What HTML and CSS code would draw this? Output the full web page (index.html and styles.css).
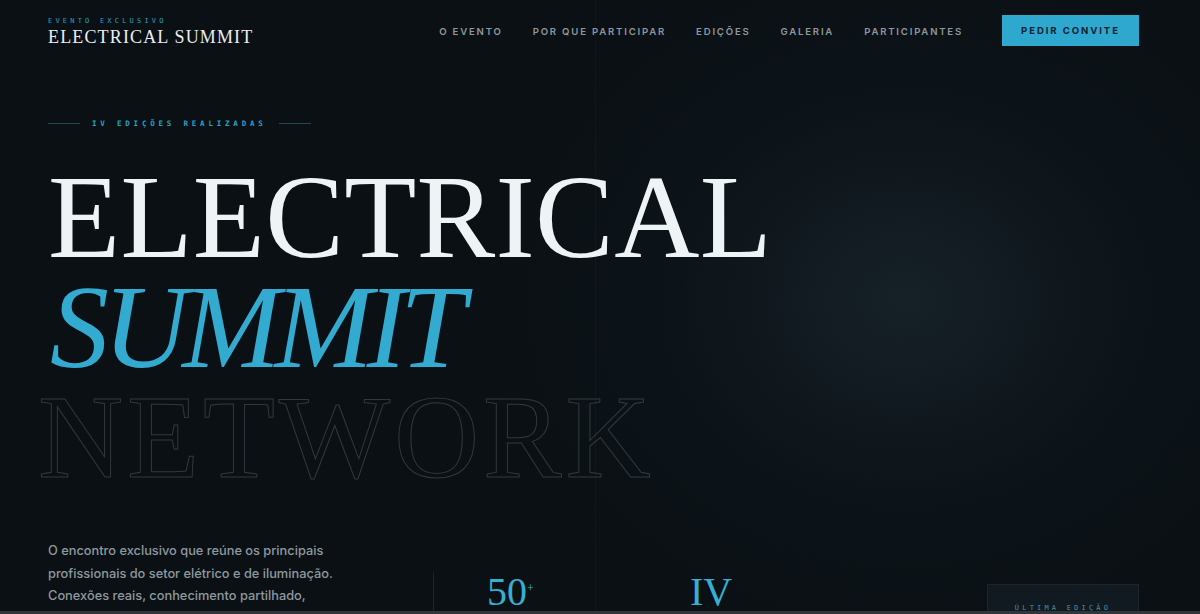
FILE: index.html
```html
<!DOCTYPE html>
<html lang="pt">
<head>
<meta charset="utf-8">
<title>Electrical Summit</title>
<link rel="stylesheet" href="styles.css">
</head>
<body>
<div class="page">
  <header class="topbar">
    <div class="brand">
      <span class="brand-eyebrow">EVENTO EXCLUSIVO</span>
      <span class="brand-name">ELECTRICAL SUMMIT</span>
    </div>
    <nav class="nav">
      <a href="#">O EVENTO</a>
      <a href="#">POR QUE PARTICIPAR</a>
      <a href="#">EDIÇÕES</a>
      <a href="#">GALERIA</a>
      <a href="#">PARTICIPANTES</a>
    </nav>
    <a class="cta" href="#">PEDIR CONVITE</a>
  </header>

  <main class="hero">
    <div class="kicker">
      <span class="kicker-line"></span>
      <span class="kicker-text">IV EDIÇÕES REALIZADAS</span>
      <span class="kicker-line"></span>
    </div>
    <h1 class="title">
      <span class="t-main">ELECTRICAL</span>
      <span class="t-accent">SUMMIT</span>
      <span class="t-outline">NETWORK</span>
    </h1>
    <div class="hero-bottom">
      <p class="lead">O encontro exclusivo que reúne os principais profissionais do setor elétrico e de iluminação. Conexões reais, conhecimento partilhado, oportunidades únicas.</p>
      <div class="stats">
        <div class="stat"><span class="stat-num">50<sup>+</sup></span></div>
        <div class="stat"><span class="stat-num">IV</span></div>
      </div>
      <div class="edition-box"><span>ÚLTIMA EDIÇÃO</span></div>
    </div>
  </main>
</div>
</body>
</html>
```

FILE: styles.css
```css
* { box-sizing: border-box; }
html, body { margin: 0; padding: 0; height: 100%; }
body {
  background: #30363a;
  overflow: hidden;
  font-family: "Inter", "Liberation Sans", sans-serif;
}
.page {
  height: 611px;
  overflow: hidden;
  background:
    linear-gradient(90deg, transparent 595px, rgba(255,255,255,0.025) 595px, rgba(255,255,255,0.025) 596px, transparent 596px),
    radial-gradient(ellipse 420px 360px at 905px 300px, rgba(32,46,56,0.55), rgba(20,30,38,0.25) 55%, transparent 100%),
    #0a1014;
}
.topbar {
  display: flex;
  align-items: center;
  padding: 15px 61px 0 48px;
  height: 47px;
}
.brand { display: flex; flex-direction: column; }
.brand-eyebrow {
  font-family: "DejaVu Sans Mono", monospace;
  font-size: 7px;
  letter-spacing: 3.2px;
  color: #2aa0c4;
  line-height: 9px;
  margin-top: 1px;
}
.brand-name {
  font-family: "Liberation Serif", serif;
  font-size: 18px;
  letter-spacing: 1.15px;
  color: #e8eef2;
  line-height: 20px;
  margin-top: 1px;
}
.nav {
  display: flex;
  gap: 30px;
  margin-left: auto;
  margin-right: 39px;
}
.nav a {
  font-family: "Inter", sans-serif;
  font-size: 9.6px;
  font-weight: 600;
  letter-spacing: 1.8px;
  color: #8d989f;
  text-decoration: none;
}
.cta {
  display: flex;
  align-items: center;
  justify-content: center;
  width: 137px;
  height: 31px;
  background: #2ea8cf;
  color: #0b2233;
  font-family: "Inter", sans-serif;
  font-size: 9.6px;
  font-weight: 700;
  letter-spacing: 1.9px;
  text-decoration: none;
  margin-top: -2px;
}
.hero { padding: 0 61px 0 48px; }
.kicker {
  display: flex;
  align-items: center;
  gap: 12px;
  margin-top: 70px;
  height: 12px;
}
.kicker-line { width: 32px; height: 1px; background: #1e4a5c; }
.kicker-text {
  font-family: "DejaVu Sans Mono", monospace;
  font-size: 7.5px;
  letter-spacing: 3.8px;
  color: #2aa0c4;
  font-weight: bold;
}
.title {
  margin: 34px 0 0 0;
  font-family: "Liberation Serif", serif;
  font-weight: normal;
  font-size: 118px;
  line-height: 110px;
}
.title span { display: block; }
.t-main { color: #eef3f6; letter-spacing: 0.3px; }
.t-accent { color: #33aad0; font-style: italic; letter-spacing: -6px; margin-left: 2px; }
.t-outline {
  color: transparent;
  -webkit-text-stroke: 1px rgba(200,215,225,0.2);
  letter-spacing: 3.8px;
  margin-left: -10px;
}
.hero-bottom {
  display: flex;
  align-items: flex-start;
  margin-top: 47px;
}
.lead {
  margin: 0;
  width: 310px;
  font-family: "Inter", sans-serif;
  font-size: 12.8px;
  font-weight: 500;
  line-height: 22.5px;
  color: #8e999f;
}
.stats {
  display: flex;
  margin-left: 75px;
  margin-top: 32px;
  border-left: 1px solid #1b252c;
  padding-left: 53px;
  height: 80px;
}
.stat { width: 203px; }
.stat-num {
  font-family: "Liberation Serif", serif;
  font-size: 40px;
  line-height: 40px;
  color: #36afd3;
  display: block;
  margin-top: 0;
}
.stat-num sup { font-size: 12px; vertical-align: top; position: relative; top: -4px; }
.edition-box {
  margin-left: auto;
  margin-top: 44px;
  width: 152px;
  height: 60px;
  background: #111a20;
  border: 1px solid #1a252c;
  display: flex;
  justify-content: center;
  padding-top: 19px;
}
.edition-box span {
  font-family: "DejaVu Sans Mono", monospace;
  font-size: 7px;
  letter-spacing: 3.2px;
  color: #4a8fa6;
}
```
